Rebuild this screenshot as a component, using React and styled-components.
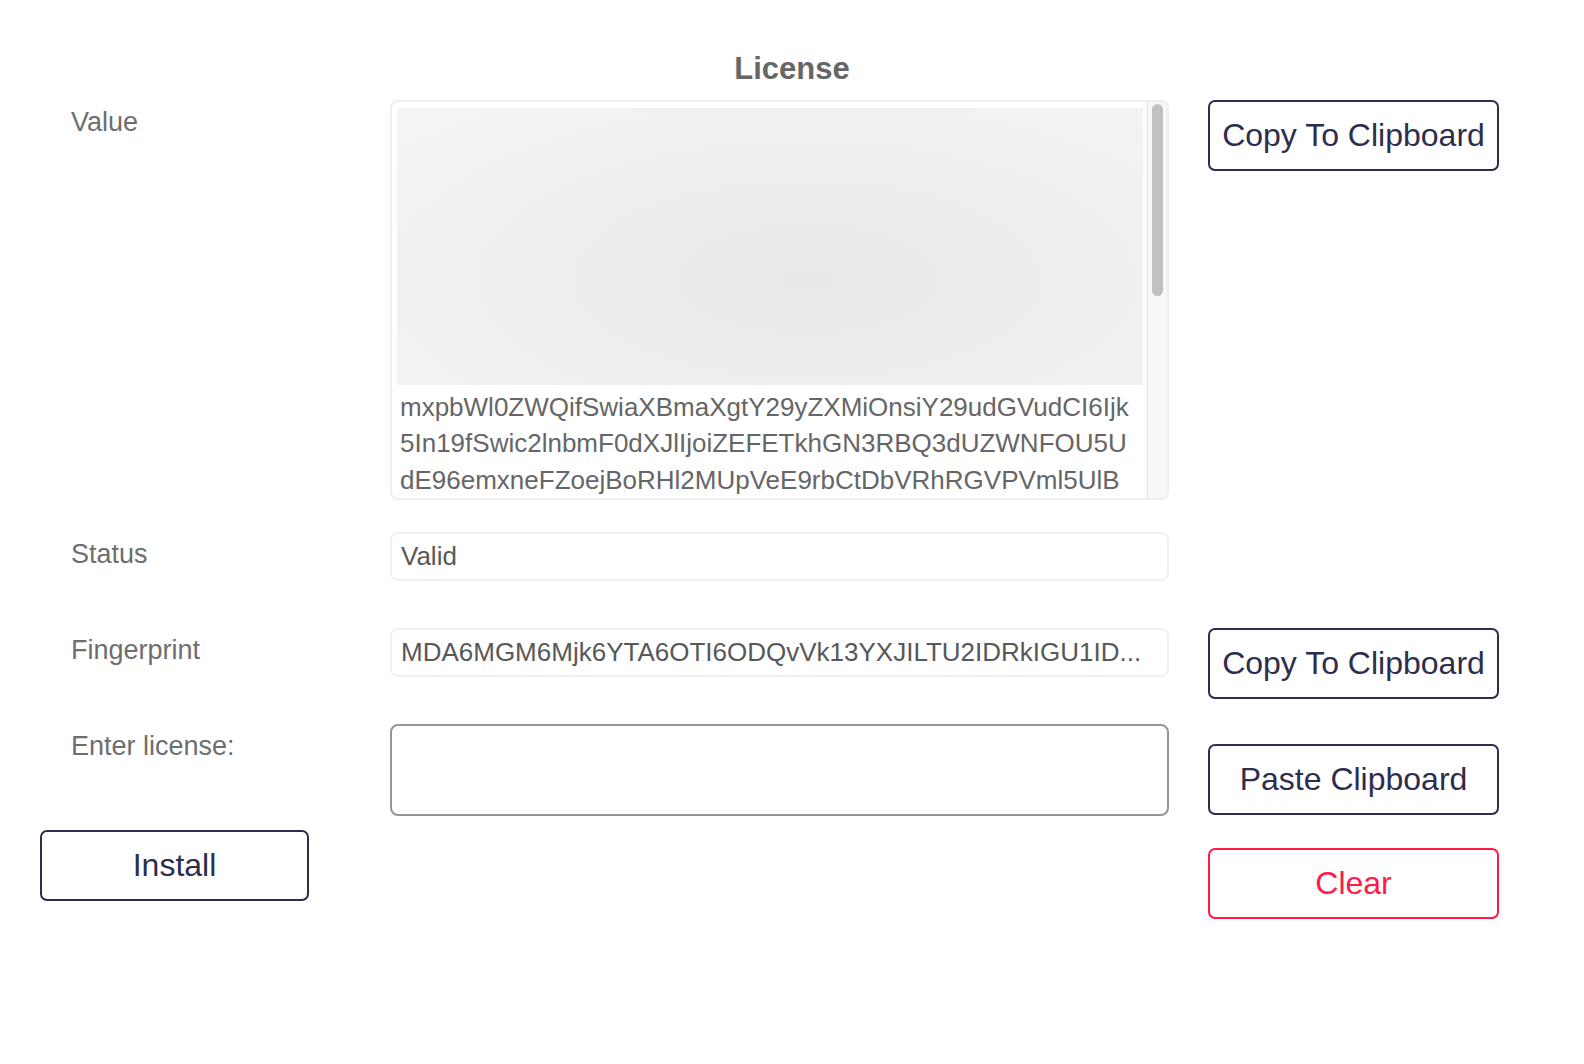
import React, { useState } from "react";
import styled, { createGlobalStyle } from "styled-components";

const GlobalStyle = createGlobalStyle`
  body {
    margin: 0;
    background: #fff;
    font-family: "Liberation Sans", Arial, Helvetica, sans-serif;
  }
  * {
    box-sizing: border-box;
  }
`;

const licenseLines = [
  "mxpbWl0ZWQifSwiaXBmaXgtY29yZXMiOnsiY29udGVudCI6Ijk",
  "5In19fSwic2lnbmF0dXJlIjoiZEFETkhGN3RBQ3dUZWNFOU5U",
  "dE96emxneFZoejBoRHl2MUpVeE9rbCtDbVRhRGVPVml5UlB",
];

const Page = styled.div`
  padding-top: 49px;
  min-height: 100vh;
`;

const Title = styled.h1`
  margin: 0;
  text-align: center;
  font-size: 31px;
  line-height: 40px;
  font-weight: bold;
  color: #666;
`;

const Form = styled.div`
  padding-left: 40px;
`;

const Row = styled.div`
  display: grid;
  grid-template-columns: 350px 779px 1fr;
  align-items: start;
  margin-top: ${(p) => p.$gap}px;
`;

const Label = styled.div`
  padding: 6px 0 0 31px;
  font-size: 27px;
  line-height: 32px;
  color: #6e6e6e;
`;

const Actions = styled.div`
  padding-left: 39px;
  padding-top: ${(p) => p.$offset || 0}px;
`;

const Button = styled.button`
  width: ${(p) => p.$width || 291}px;
  height: 71px;
  border: 2px solid ${(p) => (p.$danger ? "#ff1a47" : "#2e2d4d")};
  border-radius: 7px;
  background: #fff;
  color: ${(p) => (p.$danger ? "#ff1a47" : "#2e2d4d")};
  font-family: "Liberation Sans", Arial, sans-serif;
  font-size: 32px;
  cursor: pointer;
  padding: 0;
`;

const ValueBox = styled.div`
  display: flex;
  height: 400px;
  border: 2px solid #eceef0;
  border-radius: 8px;
  overflow: hidden;
`;

const ValueContent = styled.div`
  flex: 1;
  min-width: 0;
  padding: 6px 4px 0 5px;
  overflow: hidden;
`;

const ScrollTrack = styled.div`
  width: 20px;
  flex-shrink: 0;
  background: #f8f8f8;
  border-left: 1px solid #e6e6e6;
  padding: 2px 4px 0 4px;
`;

const ScrollThumb = styled.div`
  height: 192px;
  border-radius: 6px;
  background: #c1c1c1;
`;

const Preview = styled.div`
  height: 277px;
  background: radial-gradient(
    ellipse at 55% 62%,
    #e9e9e9 0%,
    #eeeeee 45%,
    #f5f5f5 100%
  );
  margin-bottom: 4px;
`;

const Line = styled.div`
  padding-left: 3px;
  font-size: 26px;
  line-height: 36.4px;
  color: #666;
  white-space: nowrap;
`;

const Field = styled.div`
  height: 49px;
  border: 2px solid #eef0f2;
  border-radius: 8px;
  padding: 0 9px;
  font-size: 26px;
  line-height: 45px;
  color: #585858;
  white-space: nowrap;
  overflow: hidden;
  text-overflow: ellipsis;
`;

const LicenseInput = styled.textarea`
  display: block;
  width: 779px;
  height: 92px;
  border: 2px solid #959595;
  border-radius: 8px;
  padding: 8px 10px;
  resize: none;
  font-family: "Liberation Sans", Arial, sans-serif;
  font-size: 26px;
  color: #555;
  outline: none;
`;

const App = () => {
  const [license, setLicense] = useState("");

  return (
    <Page>
      <GlobalStyle />
      <Title>License</Title>
      <Form>
        <Row $gap={11}>
          <Label>Value</Label>
          <ValueBox>
            <ValueContent>
              <Preview />
              {licenseLines.map((line, i) => (
                <Line key={i}>{line}</Line>
              ))}
            </ValueContent>
            <ScrollTrack>
              <ScrollThumb />
            </ScrollTrack>
          </ValueBox>
          <Actions>
            <Button>Copy To Clipboard</Button>
          </Actions>
        </Row>

        <Row $gap={32}>
          <Label>Status</Label>
          <Field>Valid</Field>
        </Row>

        <Row $gap={47}>
          <Label>Fingerprint</Label>
          <Field>MDA6MGM6Mjk6YTA6OTI6ODQvVk13YXJILTU2IDRkIGU1ID...</Field>
          <Actions>
            <Button>Copy To Clipboard</Button>
          </Actions>
        </Row>

        <Row $gap={25}>
          <Label>Enter license:</Label>
          <LicenseInput
            value={license}
            onChange={(e) => setLicense(e.target.value)}
          />
          <Actions $offset={20}>
            <Button>Paste Clipboard</Button>
          </Actions>
        </Row>

        <Row $gap={14}>
          <div>
            <Button $width={269}>Install</Button>
          </div>
          <div />
          <Actions $offset={18}>
            <Button $danger onClick={() => setLicense("")}>
              Clear
            </Button>
          </Actions>
        </Row>
      </Form>
    </Page>
  );
};

export default App;
